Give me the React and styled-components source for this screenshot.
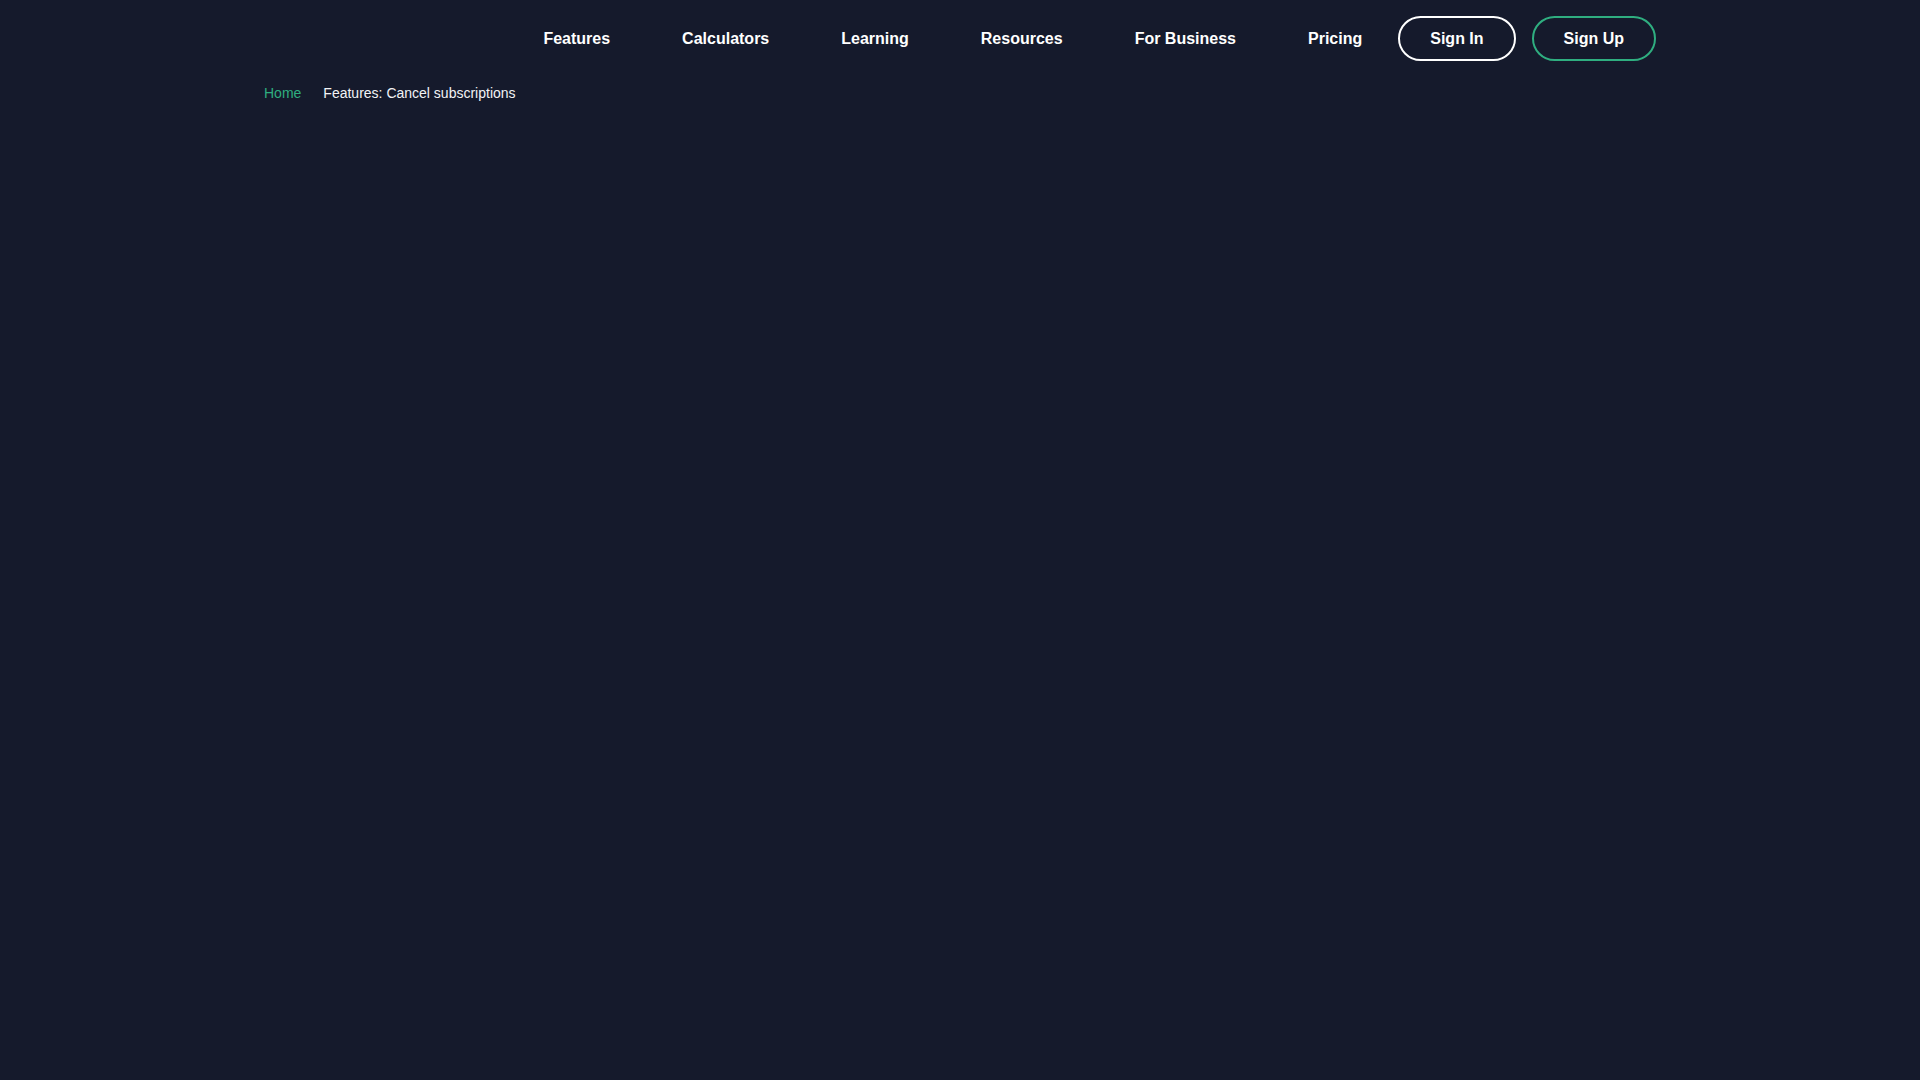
import React from "react";
import styled, { createGlobalStyle } from "styled-components";

const Global = createGlobalStyle`
  html, body { margin: 0; padding: 0; background: #151a2c; }
  body { font-family: "Liberation Sans", Arial, Helvetica, sans-serif; color: #ffffff; min-height: 100vh; }
  * { box-sizing: border-box; }
`;

const Page = styled.div`
  min-height: 100vh;
  background: #151a2c;
`;

const Container = styled.div`
  width: 1392px;
  margin: 0 auto;
`;

const Header = styled.header`
  height: 77px;
  display: flex;
  align-items: center;
  justify-content: space-between;
`;

const LogoSlot = styled.div`
  width: 200px;
  height: 40px;
`;

const Nav = styled.nav`
  display: flex;
  align-items: center;
`;

const NavLink = styled.a`
  padding: 0 36px;
  font-size: 16px;
  font-weight: 700;
  color: #ffffff;
  text-decoration: none;
  line-height: 20px;
  cursor: pointer;
`;

const PillButton = styled.a`
  display: inline-flex;
  align-items: center;
  justify-content: center;
  height: 45px;
  padding: 0 30px;
  margin-left: ${(p) => (p.$first ? "0" : "16px")};
  border: 2px solid ${(p) => (p.$accent ? "#2fae80" : "#ffffff")};
  border-radius: 23px;
  font-size: 16px;
  font-weight: 700;
  color: #ffffff;
  text-decoration: none;
  cursor: pointer;
`;

const Breadcrumb = styled.div`
  display: flex;
  align-items: center;
  gap: 22px;
  margin-top: 8px;
  font-size: 14px;
  line-height: 16px;
`;

const Crumb = styled.span`
  color: ${(p) => (p.$link ? "#2fae80" : "#f2f3f6")};
`;

export default function App() {
  const links = ["Features", "Calculators", "Learning", "Resources", "For Business", "Pricing"];
  return (
    <Page>
      <Global />
      <Container>
        <Header>
          <LogoSlot />
          <Nav>
            {links.map((l) => (
              <NavLink key={l}>{l}</NavLink>
            ))}
            <PillButton $first>Sign In</PillButton>
            <PillButton $accent>Sign Up</PillButton>
          </Nav>
        </Header>
        <Breadcrumb>
          <Crumb $link>Home</Crumb>
          <Crumb>Features: Cancel subscriptions</Crumb>
        </Breadcrumb>
      </Container>
    </Page>
  );
}
